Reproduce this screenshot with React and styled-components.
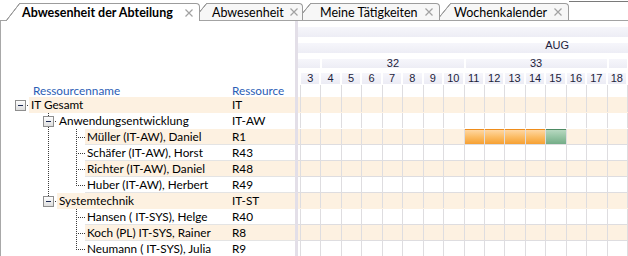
import React from 'react';
import styled, { createGlobalStyle } from 'styled-components';

const GlobalStyle = createGlobalStyle`
  html, body { margin: 0; padding: 0; background: #fff; }
  body { font-family: Lato, "Liberation Sans", Arial, sans-serif; color: #000; }
  * { box-sizing: border-box; }
`;

const COL = 20.45;
const DAYS = [3, 4, 5, 6, 7, 8, 9, 10, 11, 12, 13, 14, 15, 16, 17, 18];
const LINE = '#9c9c9c';
const PEACH = '#fdf1e1';
const GRID = '#dedde0';

// offset = gap to previous tab, width = tab body incl. border, pad = text inset
const TABS = [
  { title: 'Abwesenheit der Abteilung', active: true, offset: 20, width: 180, pad: 2, padRight: 6 },
  { title: 'Abwesenheit', offset: 7, width: 96, pad: 5, padRight: 4 },
  { title: 'Meine Tätigkeiten', offset: 8, width: 129, pad: 9, padRight: 6 },
  { title: 'Wochenkalender', offset: 11, width: 118, pad: 3, padRight: 6 },
];

// guides: one entry per tree level, last one is the node's own connector
const ROWS = [
  { name: 'IT Gesamt', code: 'IT', guides: ['box'] },
  { name: 'Anwendungsentwicklung', code: 'IT-AW', guides: ['none', 'boxTee'] },
  { name: 'Müller (IT-AW), Daniel', code: 'R1', guides: ['none', 'pass', 'tee'], leaf: true,
    bars: { 11: 'vacation', 12: 'vacation', 13: 'vacation', 14: 'vacation', 15: 'approved' } },
  { name: 'Schäfer (IT-AW), Horst', code: 'R43', guides: ['none', 'pass', 'tee'], leaf: true },
  { name: 'Richter (IT-AW), Daniel', code: 'R48', guides: ['none', 'pass', 'tee'], leaf: true },
  { name: 'Huber (IT-AW), Herbert', code: 'R49', guides: ['none', 'pass', 'elbow'], leaf: true },
  { name: 'Systemtechnik', code: 'IT-ST', guides: ['none', 'boxElbow'] },
  { name: 'Hansen ( IT-SYS), Helge', code: 'R40', guides: ['none', 'none', 'tee'], leaf: true },
  { name: 'Koch (PL) IT-SYS, Rainer', code: 'R8', guides: ['none', 'none', 'tee'], leaf: true },
  { name: 'Neumann ( IT-SYS), Julia', code: 'R9', guides: ['none', 'none', 'elbow'], leaf: true },
];

const Window = styled.div`
  width: 628px;
  height: 256px;
  display: flex;
  flex-direction: column;
  overflow: hidden;
  background: #fff;
`;

const TabBar = styled.div`
  flex: none;
  display: flex;
  align-items: flex-end;
  height: 21px;
  border-bottom: 1px solid #a3a3a3;
`;

const Tab = styled.div`
  position: relative;
  z-index: ${p => p.$z};
  flex: none;
  display: flex;
  align-items: center;
  justify-content: space-between;
  width: ${p => p.$width}px;
  height: ${p => (p.$active ? 18 : 17)}px;
  margin-left: ${p => p.$offset}px;
  margin-bottom: ${p => (p.$active ? -1 : 0)}px;
  padding: 0 ${p => p.$padRight}px 0 ${p => p.$pad}px;
  border-top: 1px solid ${LINE};
  border-right: 1px solid ${LINE};
  border-top-right-radius: 4px;
  background: ${p => (p.$active ? '#fff' : '#f7f7f7')};
  font-size: 12.5px;
  font-weight: ${p => (p.$active ? 700 : 400)};
  white-space: nowrap;

  &::before {
    content: '';
    position: absolute;
    top: -1px;
    bottom: 0;
    left: -14px;
    width: 14px;
    background: linear-gradient(
      to bottom right,
      transparent calc(50% - 0.8px),
      ${LINE} calc(50% - 0.3px),
      ${LINE} calc(50% + 0.3px),
      ${p => (p.$active ? '#fff' : '#f7f7f7')} calc(50% + 0.8px)
    );
  }
`;

const CloseIcon = styled.svg`
  flex: none;
`;

const FrameEdge = styled.div`
  flex: 1;
  align-self: flex-start;
  margin-top: 1px;
  border-top: 1px solid #7a7a7a;
`;

const Main = styled.div`
  flex: 1;
  display: flex;
  min-height: 0;
`;

const TreePanel = styled.div`
  flex: none;
  width: 295px;
  border-left: 1px solid #a8a8a8;
  font-size: 11.75px;
`;

const TreeHead = styled.div`
  height: 76px;
  display: flex;
  align-items: flex-end;
  color: #2b5db5;
  line-height: 13px;
`;

const HeadName = styled.div`
  width: 231px;
  padding-left: 32px;
`;

const HeadCode = styled.div`
  flex: 1;
`;

const TreeRow = styled.div`
  display: flex;
  height: 16px;
`;

const GuideSvg = styled.svg`
  display: block;
  flex: none;
`;

const Label = styled.div`
  flex: 1;
  display: flex;
  align-items: center;
  padding-left: 2px;
  background: ${p => (p.$shaded ? PEACH : '#fff')};
  border-bottom: 1px solid ${p => (p.$leaf ? '#e4e4e4' : 'transparent')};
  white-space: nowrap;
  line-height: 14px;
`;

const Name = styled.span`
  flex: 1;
`;

const Code = styled.span`
  flex: none;
  width: ${p => p.$width}px;
`;

const Splitter = styled.div`
  flex: none;
  width: 3px;
  background: #e3dfe8;
`;

const Gantt = styled.div`
  flex: 1;
  overflow: hidden;
  font-family: "Liberation Sans", Arial, sans-serif;
  font-size: 11px;
  color: #1d1d3c;
`;

const TimeGrid = styled.div`
  display: grid;
  grid-template-columns: 2px repeat(${DAYS.length + 1}, ${COL}px);
  height: ${p => p.$h || 16}px;
`;

const Band = styled.div`
  height: 16px;
  padding-top: 6px;
`;

const BandFill = styled.div`
  height: 100%;
  background: linear-gradient(#f6f6fb, #ededf5);
`;

const MonthRow = styled(TimeGrid)`
  background: linear-gradient(#fff 0, #fff 6px, #f6f6fb 6px, #ededf5 100%);
  line-height: 16px;
`;

const MonthLabel = styled.div`
  grid-column: ${p => p.$col} / span 3;
`;

const WeekCell = styled.div`
  grid-column: span ${p => p.$span};
  margin-left: ${p => (p.$first ? 0 : 2)}px;
  margin-top: 6px;
  margin-bottom: 1px;
  background: linear-gradient(#f6f6fb, #ededf5);
  line-height: 9px;
  text-align: center;
`;

const DayCell = styled.div`
  margin: 4px 1px 1px 1px;
  background: ${p => (p.$empty ? 'transparent' : 'linear-gradient(#f6f6fb, #ececf5)')};
  line-height: 11px;
  text-align: center;
`;

const GanttRow = styled(TimeGrid)`
  background: ${p => (p.$shaded ? PEACH : '#fff')};
  border-bottom: 1px solid ${p => (p.$leaf ? GRID : 'transparent')};
`;

const SlotCell = styled.div`
  border-left: ${p => (p.$edge ? 'none' : `1px solid ${GRID}`)};
  background: ${p =>
    p.$kind === 'vacation'
      ? 'linear-gradient(#ef8d1c 0, #ef8d1c 1px, #ffd7a2 1px, #fbbb62 55%, #f6a033 100%)'
      : p.$kind === 'approved'
      ? 'linear-gradient(#4d8a62 0, #4d8a62 1px, #b7d8c0 1px, #93c3a2 55%, #74ac87 100%)'
      : 'transparent'};
`;

function Guide({ kind }) {
  const dot = { stroke: '#3a3a3a', strokeWidth: 1, strokeDasharray: '1 1' };
  const stem = kind === 'pass' || kind === 'tee' || kind === 'boxTee'
    ? 16 : kind === 'elbow' ? 9 : kind === 'boxElbow' ? 4 : 0;
  const hasBox = kind === 'box' || kind === 'boxTee' || kind === 'boxElbow';
  return (
    <GuideSvg width="28" height="16" viewBox="0 0 28 16">
      <defs>
        <linearGradient id="boxFill" x1="0" y1="0" x2="0" y2="1">
          <stop offset="0" stopColor="#ffffff" />
          <stop offset="1" stopColor="#dcdcdc" />
        </linearGradient>
      </defs>
      {stem > 0 && <line x1="19.5" y1="0" x2="19.5" y2={stem} {...dot} />}
      {(kind === 'tee' || kind === 'elbow') && <line x1="21" y1="8.5" x2="28" y2="8.5" {...dot} />}
      {hasBox && (
        <>
          <line x1="26" y1="8.5" x2="29" y2="8.5" {...dot} />
          <rect x="14.5" y="3.5" width="10" height="10" fill="url(#boxFill)" stroke="#8e8e8e" />
          <line x1="17" y1="8.5" x2="22" y2="8.5" stroke="#1c2a55" strokeWidth="1" />
        </>
      )}
    </GuideSvg>
  );
}

function Close() {
  return (
    <CloseIcon width="8" height="8" viewBox="0 0 8 8">
      <path d="M0.5 0.5 L7.5 7.5 M7.5 0.5 L0.5 7.5" stroke="#a2a2a2" strokeWidth="1.2" />
    </CloseIcon>
  );
}

export default function App() {
  return (
    <Window>
      <GlobalStyle />
      <TabBar>
        {TABS.map((t, i) => (
          <Tab
            key={t.title}
            $active={t.active}
            $offset={t.offset}
            $width={t.width}
            $pad={t.pad}
            $padRight={t.padRight}
            $z={t.active ? 10 : 5 - i}
          >
            {t.title}
            <Close />
          </Tab>
        ))}
        <FrameEdge />
      </TabBar>

      <Main>
        <TreePanel>
          <TreeHead>
            <HeadName>Ressourcenname</HeadName>
            <HeadCode>Ressource</HeadCode>
          </TreeHead>
          {ROWS.map((r, i) => (
            <TreeRow key={r.name}>
              {r.guides.map((g, j) => <Guide key={j} kind={g} />)}
              <Label $shaded={i % 2 === 0} $leaf={r.leaf}>
                <Name>{r.name}</Name>
                <Code $width={63}>{r.code}</Code>
              </Label>
            </TreeRow>
          ))}
        </TreePanel>

        <Splitter />

        <Gantt>
          <Band><BandFill /></Band>
          <MonthRow>
            <MonthLabel $col={14}>AUG</MonthLabel>
          </MonthRow>
          <TimeGrid>
            <WeekCell $span={2} $first />
            <WeekCell $span={7}>32</WeekCell>
            <WeekCell $span={7}>33</WeekCell>
            <WeekCell $span={1} />
          </TimeGrid>
          <TimeGrid>
            <DayCell $empty />
            {DAYS.map(d => <DayCell key={d}>{d}</DayCell>)}
          </TimeGrid>
          <TimeGrid $h={12}>
            <SlotCell $edge />
            {DAYS.map(d => <SlotCell key={d} />)}
            <SlotCell />
          </TimeGrid>
          {ROWS.map((r, i) => (
            <GanttRow key={r.name} $shaded={i % 2 === 0} $leaf={r.leaf}>
              <SlotCell $edge />
              {DAYS.map(d => <SlotCell key={d} $kind={r.bars && r.bars[d]} />)}
              <SlotCell />
            </GanttRow>
          ))}
        </Gantt>
      </Main>
    </Window>
  );
}
